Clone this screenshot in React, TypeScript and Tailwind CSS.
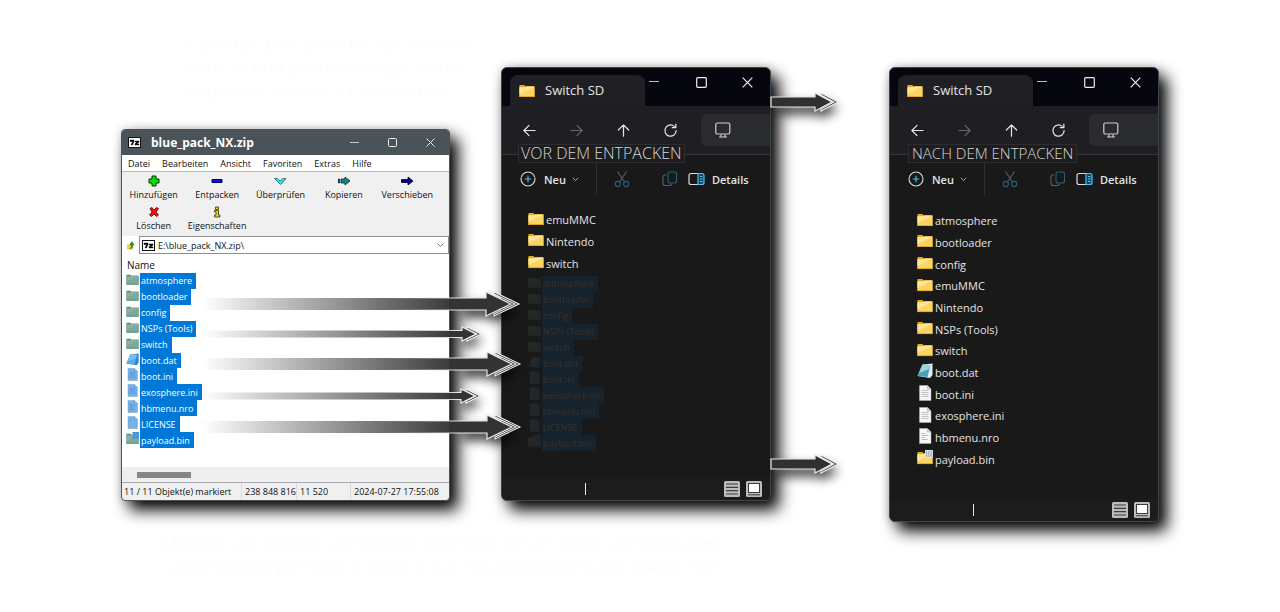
import React from "react";

type Kind = "folder" | "dat" | "doc" | "textdoc" | "blank" | "bin";
type Entry = { name: string; kind: Kind };

const archive: Entry[] = [
  { name: "atmosphere", kind: "folder" },
  { name: "bootloader", kind: "folder" },
  { name: "config", kind: "folder" },
  { name: "NSPs (Tools)", kind: "folder" },
  { name: "switch", kind: "folder" },
  { name: "boot.dat", kind: "dat" },
  { name: "boot.ini", kind: "doc" },
  { name: "exosphere.ini", kind: "doc" },
  { name: "hbmenu.nro", kind: "textdoc" },
  { name: "LICENSE", kind: "blank" },
  { name: "payload.bin", kind: "bin" },
];

const before: Entry[] = [
  { name: "emuMMC", kind: "folder" },
  { name: "Nintendo", kind: "folder" },
  { name: "switch", kind: "folder" },
];

const after: Entry[] = [
  { name: "atmosphere", kind: "folder" },
  { name: "bootloader", kind: "folder" },
  { name: "config", kind: "folder" },
  { name: "emuMMC", kind: "folder" },
  { name: "Nintendo", kind: "folder" },
  { name: "NSPs (Tools)", kind: "folder" },
  { name: "switch", kind: "folder" },
  { name: "boot.dat", kind: "dat" },
  { name: "boot.ini", kind: "doc" },
  { name: "exosphere.ini", kind: "doc" },
  { name: "hbmenu.nro", kind: "textdoc" },
  { name: "payload.bin", kind: "bin" },
];

/* File type icon; `selected` gives the blue-tinted version. */
function FileIcon({ kind, selected = false, className }: { kind: Kind; selected?: boolean; className: string }) {
  const tab = selected ? "#4f8f86" : "#f0a80c";
  const body = selected ? "#7fa79b" : "#fcd462";
  const light = selected ? "#8db0a0" : "#ffe596";
  const paper = selected ? "#78b0e4" : "#f6f6f6";
  const line = selected ? "#4d93d6" : "#b4b4b4";
  if (kind === "folder" || kind === "bin") {
    return (
      <svg viewBox="0 0 16 16" className={className} aria-hidden="true">
        <path d="M.5 2h5l1 1.500H15.500V14H.5z" fill={tab} />
        <path d="M.5 4.200h5.500l1-.7h8.500V14H.5z" fill={body} />
        <path d="M.5 4.200h5.500l1-.7h8.500L.5 11z" fill={light} />
        <path d="M.5 13.300h15v.8H.5z" fill={selected ? "#5b8f84" : "#d99a1c"} />
        {kind === "bin" && (
          <>
            <rect x="8" y="0" width="8" height="8" fill={selected ? "#3f8fdc" : "#e4e8ee"} />
            <path
              d="M9.500 1v6M12 1v6M14.500 1v6M8.500 2h7M8.500 4h7M8.500 6h7"
              stroke={selected ? "#6aa9e4" : "#7f95b5"}
              strokeWidth=".7"
              strokeDasharray="1.500 .6"
            />
          </>
        )}
      </svg>
    );
  }
  if (kind === "dat") {
    return (
      <svg viewBox="0 0 16 16" className={className} aria-hidden="true">
        <path d="M5.500 1.500 15.500.5V12l-2.500 3L.5 13z" fill={selected ? "#2f86cf" : "#dfeef2"} />
        <path d="M5.500 1.500 13.500 2l-3 12L.5 13z" fill={selected ? "#5fa9e2" : "#4f9fb4"} />
        <path d="M5.500 1.500 13.500 2l-1 4L2 10z" fill={selected ? "#7dbcec" : "#9ad2de"} />
      </svg>
    );
  }
  return (
    <svg viewBox="0 0 16 16" className={className} aria-hidden="true">
      <path d="M2.500.5h8l3.500 3.500v11.500H2.500z" fill={paper} stroke={line} strokeWidth=".5" />
      <path d="M10.500.5V4H14" fill={selected ? "#a5cdf0" : "#d0d0d0"} stroke={line} strokeWidth=".7" />
      {kind === "doc" && <path d="M4.500 5.500h7M4.500 7.500h7M4.500 9.500h7M4.500 11.500h7" stroke={line} strokeWidth=".8" />}
      {kind === "textdoc" && <path d="M4.500 5.500h4M4.500 7.500h7M4.500 9.500h3M4.500 11.500h6" stroke={line} strokeWidth=".9" />}
    </svg>
  );
}

function SevenZip({ className }: { className: string }) {
  return (
    <svg viewBox="0 0 13 11" className={className} aria-hidden="true">
      <rect width="13" height="11" fill="#111" />
      <rect x="1" y="1" width="11" height="9" fill="#fff" />
      <path d="M2 3h4v1.500L4.500 8H3l1.500-3.500H2zM7 4h4v1.200L8.800 7H11v1H7V6.800L9 5H7z" fill="#000" stroke="#000" strokeWidth=".4" />
    </svg>
  );
}

function SelectedList() {
  return (
    <ul className="grid h-[175px] grid-rows-11 text-[9px] text-white">
      {archive.map((f) => (
        <li key={f.name} className="flex items-stretch">
          <FileIcon kind={f.kind} selected className="mr-px size-[13px] shrink-0" />
          <span className="flex items-center bg-[#0078d7] pr-1 pl-px leading-none">{f.name}</span>
        </li>
      ))}
    </ul>
  );
}

const tools = [
  { label: "Hinzufügen", icon: <path d="M6 1h4v3h3v4h-3v3H6V8H3V4h3z" fill="#0de00d" stroke="#053805" /> },
  { label: "Entpacken", icon: <path d="M3 4.500h10v3H3z" fill="#1010f0" stroke="#000060" /> },
  { label: "Überprüfen", icon: <path d="M2.500 3.500h3L8 6l3-2.500h3L8.500 9.500z" fill="#20f0f0" stroke="#126070" strokeWidth=".8" /> },
  { label: "Kopieren", icon: <path d="M2.500 4h1v4h-1zM5 4h4V2l5 4-5 4V8H5z" fill="#0a8a8a" stroke="#022" strokeWidth=".8" /> },
  { label: "Verschieben", icon: <path d="M2.500 4.500H9V2l5 4-5 4V7.500H2.500z" fill="#00008c" stroke="#000030" strokeWidth=".8" /> },
  { label: "Löschen", icon: <path d="M4 2.500 6 1.500l2 2.500 2.500-2.500 2 1L10 6l2.500 3-2 1.500L8 8l-2.500 2.500-2-1.500L6 6z" fill="#f01010" stroke="#500" strokeWidth=".8" /> },
  { label: "Eigenschaften", icon: <path d="M6.500 1h3v2.500h-3zM5.500 4.500h4V9H11v2H5.500V9H7V6H5.500z" fill="#e8d810" stroke="#333000" strokeWidth=".8" /> },
];

function ZipWindow() {
  return (
    <section className="flex flex-col overflow-hidden rounded-sm border border-[#4a5358] bg-[#f0f0f0] text-[9px] text-[#111] shadow-[8px_9px_16px_rgba(0,0,0,1),0_0_10px_rgba(0,0,0,0.15)]">
      <header className="flex h-[25px] items-center bg-[#4a5358] text-white">
        <SevenZip className="ml-1.5 h-[11px] w-[13px]" />
        <h1 className="ml-2.5 text-[12px] leading-none font-bold">blue_pack_NX.zip</h1>
        <div className="ml-auto flex h-full">
          <button aria-label="Minimieren" className="grid w-[38px] place-items-center">
            <svg viewBox="0 0 9 9" className="size-[9px]"><path d="M0 4.500h9" stroke="#c8cccf" /></svg>
          </button>
          <button aria-label="Maximieren" className="grid w-[38px] place-items-center">
            <svg viewBox="0 0 9 9" className="size-[9px]"><rect x=".5" y=".5" width="8" height="8" rx="1" fill="none" stroke="#eee" /></svg>
          </button>
          <button aria-label="Schließen" className="grid w-[38px] place-items-center">
            <svg viewBox="0 0 9 9" className="size-[9px]"><path d="M.5.5l8 8M8.500.5l-8 8" stroke="#eee" /></svg>
          </button>
        </div>
      </header>
      <nav className="flex h-[17px] items-center gap-3 border-b border-[#b8babc] bg-white pl-1.5 leading-none">
        {["Datei", "Bearbeiten", "Ansicht", "Favoriten", "Extras", "Hilfe"].map((m) => (
          <button key={m}>{m}</button>
        ))}
      </nav>
      <div className="grid h-[64px] w-[317px] grid-cols-5 grid-rows-2 pt-[3px]">
        {tools.map((t) => (
          <button key={t.label} className="flex flex-col items-center gap-[3px] leading-none">
            <svg viewBox="0 0 16 12" className="h-3 w-4" aria-hidden="true">{t.icon}</svg>
            <span className="whitespace-nowrap">{t.label}</span>
          </button>
        ))}
      </div>
      <div className="flex h-[18px] items-stretch bg-[#f0f0f0]">
        <button aria-label="Übergeordneter Ordner" className="grid w-[17px] place-items-center bg-white">
          <svg viewBox="0 0 10 10" className="size-[9px]" aria-hidden="true">
            <path d="M1 4h3l1 1h3v4.500H1z" fill="#f5d040" />
            <path d="M4 8.500C6 8 6 6 6 4.500H4L6.500.5l2.500 4H7.500C7.500 7 7 8.500 4 8.500z" fill="#18a018" stroke="#0a500a" strokeWidth=".4" />
          </svg>
        </button>
        <label className="flex flex-1 items-center border border-[#8a8f96] bg-white pl-0.5">
          <SevenZip className="h-[11px] w-[13px] shrink-0" />
          <input
            aria-label="Pfad"
            defaultValue="E:\blue_pack_NX.zip\"
            className="ml-[3px] w-full min-w-0 bg-transparent leading-none outline-none"
          />
          <svg viewBox="0 0 7 5" className="mr-1 h-[5px] w-[7px] shrink-0" aria-hidden="true">
            <path d="M.5.5l3 3 3-3" fill="none" stroke="#777" />
          </svg>
        </label>
      </div>
      <div className="h-[213px] bg-white pl-1">
        <p className="flex h-[19px] items-center pt-0.5 pl-px text-[10px] leading-none">Name</p>
        <SelectedList />
      </div>
      <div className="flex h-[15px] items-center bg-[#efefef] pl-[15px]">
        <div className="h-[6px] w-[54px] bg-[#868686]" />
      </div>
      <footer className="flex h-[18px] items-center border-t border-[#a6aab0] leading-none whitespace-nowrap">
        <span className="w-[120px] border-r border-[#dadada] py-1 pl-0.5">11 / 11 Objekt(e) markiert</span>
        <span className="w-[55px] border-r border-[#dadada] py-1 pl-[3px]">238 848 816</span>
        <span className="w-[54px] border-r border-[#dadada] py-1 pl-[3px]">11 520</span>
        <span className="py-1 pl-[3px]">2024-07-27 17:55:08</span>
      </footer>
    </section>
  );
}

const navPaths = [
  { label: "Zurück", d: "M14 8H2M7.500 2.500 2 8l5.500 5.500", cls: "text-[#e6e6e6]" },
  { label: "Vorwärts", d: "M2 8h12M8.500 2.500 14 8l-5.500 5.500", cls: "text-[#66666a]" },
  { label: "Nach oben", d: "M8 14V2M2.500 7.500 8 2l5.500 5.500", cls: "text-[#e6e6e6]" },
  { label: "Aktualisieren", d: "M14 8a6 6 0 1 1-2-4.400M13.700 1.200v3.800H9.900", cls: "text-[#e6e6e6]" },
];

function Explorer({ badge, children }: { badge: React.ReactNode; children: React.ReactNode }) {
  return (
    <section className="flex w-[270px] flex-col overflow-hidden rounded-md border border-[#3d484d] bg-[#191919] text-[#e4e4e4] shadow-[8px_9px_16px_rgba(0,0,0,1),0_0_10px_rgba(0,0,0,0.2)]">
      <header className="flex h-[38px] items-end bg-[#06060e] pl-2">
        <div className="flex h-[31px] w-[135px] items-center rounded-t-lg bg-[#202024] pl-[9px]">
          <FileIcon kind="folder" className="size-4" />
          <h2 className="ml-2.5 text-[13px] leading-none">Switch SD</h2>
        </div>
        <div className="ml-auto flex h-[28px] self-start">
          <button aria-label="Minimieren" className="flex w-[29px] items-center">
            <svg viewBox="0 0 10 10" className="size-[10px]"><path d="M0 4.500h10" stroke="#bbb" /></svg>
          </button>
          <button aria-label="Maximieren" className="grid w-[46px] place-items-center">
            <svg viewBox="0 0 11 11" className="size-[11px]"><rect x=".7" y=".7" width="9.600" height="9.600" rx="1" fill="none" stroke="#eee" strokeWidth="1.200" /></svg>
          </button>
          <button aria-label="Schließen" className="grid w-[46px] place-items-center">
            <svg viewBox="0 0 11 11" className="size-[11px]"><path d="M.7.7l9.600 9.600M10.300.7.7 10.300" stroke="#eee" strokeWidth="1.200" /></svg>
          </button>
        </div>
      </header>
      <nav className="relative flex h-[49px] items-center border-b border-[#38383b] bg-[#1f1f23] pl-1">
        {navPaths.map((n) => (
          <button key={n.label} aria-label={n.label} className={`grid h-8 w-[47px] place-items-center ${n.cls}`}>
            <svg viewBox="0 0 16 16" className="size-[15px]" fill="none" stroke="currentColor" strokeWidth="1.300" strokeLinecap="round" strokeLinejoin="round"><path d={n.d} /></svg>
          </button>
        ))}
        <button aria-label="Dieser PC" className="ml-[7px] flex h-8 flex-1 items-center rounded-l-md bg-[#2a2b2f] pl-3.5">
          <svg viewBox="0 0 16 16" className="size-4" fill="none" stroke="#cfcfcf" strokeWidth="1.200" strokeLinejoin="round">
            <rect x=".8" y="1" width="14" height="11" rx="1.500" />
            <path d="M6 12.500v2M10 12.500v2M4 15h8" />
          </svg>
        </button>
        {badge}
      </nav>
      <div className="flex h-[48px] items-center pl-[18px] text-[11px] leading-none">
        <button className="flex h-8 items-center font-semibold">
          <svg viewBox="0 0 16 16" className="size-4" fill="none" strokeWidth="1.100">
            <circle cx="8" cy="8" r="7" stroke="#dcdcdc" />
            <path d="M8 4.800v6.400M4.800 8h6.400" stroke="#4cc2ff" />
          </svg>
          <span className="ml-2">Neu</span>
          <svg viewBox="0 0 7 5" className="ml-1.5 h-[5px] w-[7px]" fill="none"><path d="M.8.800l2.700 2.700L6.200.8" stroke="#aaa" /></svg>
        </button>
        <div className="ml-[17px] h-8 w-px bg-[#303030]" />
        <button aria-label="Ausschneiden" className="ml-[17px]">
          <svg viewBox="0 0 16 18" className="h-[18px] w-4" fill="none" strokeWidth="1.100">
            <path d="M3.500 1.500 10.500 12M12.500 1.500 5.500 12" stroke="#5e5e5e" />
            <circle cx="3.800" cy="14" r="2.600" stroke="#28607c" />
            <circle cx="12.200" cy="14" r="2.600" stroke="#28607c" />
          </svg>
        </button>
        <button aria-label="Kopieren" className="ml-8">
          <svg viewBox="0 0 16 16" className="size-4" fill="none" strokeWidth="1.100">
            <path d="M4 4H3a2 2 0 0 0-2 2v6.500a2 2 0 0 0 2 2h4.500a2 2 0 0 0 2-1.500" stroke="#5e5e5e" />
            <rect x="6" y="1" width="8.500" height="11" rx="2" stroke="#28607c" />
          </svg>
        </button>
        <button className="ml-2.5 flex items-center font-semibold">
          <svg viewBox="0 0 17 14" className="h-3.5 w-[17px]" fill="none" strokeWidth="1.200">
            <path d="M10 1.500H3a2 2 0 0 0-2 2v7a2 2 0 0 0 2 2h7" stroke="#dcdcdc" />
            <path d="M10 1.500h4a2 2 0 0 1 2 2v7a2 2 0 0 1-2 2h-4z" fill="#14445e" stroke="#4cc2ff" />
            <path d="M12 4.500h2.500M12 7h2.500M12 9.500h2.500" stroke="#4cc2ff" />
          </svg>
          <span className="ml-[7px]">Details</span>
        </button>
      </div>
      {children}
      <footer className="flex h-[22px] items-center gap-1.5 bg-[#1c1c1c] pr-2">
        <span className="mr-auto ml-[83px] h-3 w-px bg-[#e8e8e8]" />
        <button aria-label="Detailansicht">
          <svg viewBox="0 0 16 16" className="size-4">
            <rect width="16" height="16" rx="1.500" fill="#bdbdbd" />
            <path d="M2 3h12M2 6.300h12M2 9.600h12M2 13h12" stroke="#3c3c3c" strokeWidth="1.200" />
          </svg>
        </button>
        <button aria-label="Symbolansicht">
          <svg viewBox="0 0 16 16" className="size-4">
            <rect width="16" height="16" rx="1.500" fill="#bdbdbd" />
            <rect x="2.500" y="2.500" width="11" height="9" fill="#fff" stroke="#3c3c3c" />
            <path d="M2 13.800h12" stroke="#3c3c3c" />
          </svg>
        </button>
      </footer>
    </section>
  );
}

function FileList({ files, className }: { files: Entry[]; className: string }) {
  return (
    <ul className={className}>
      {files.map((f) => (
        <li key={f.name} className="flex items-center text-[11px] leading-none">
          <FileIcon kind={f.kind} className="mr-0.5 size-4" />
          <span className="pt-0.5">{f.name}</span>
        </li>
      ))}
    </ul>
  );
}

/* Arrow shape: y is the axis, b half the shaft, h half the head, s start, n neck, t tip, g chevron offset. */
type ArrowShape = { y: number; s: number; n: number; t: number; h: number; b: number; g: number; fade: boolean };

const flowArrows: ArrowShape[] = [
  { y: 304, s: 200, n: 486, t: 511, h: 12, b: 6, g: 8, fade: true },
  { y: 334, s: 200, n: 462, t: 476, h: 7, b: 3.5, g: 5, fade: true },
  { y: 364, s: 200, n: 487, t: 512, h: 12, b: 6, g: 8, fade: true },
  { y: 396, s: 200, n: 461, t: 475, h: 7, b: 3.5, g: 5, fade: true },
  { y: 427, s: 200, n: 487, t: 512, h: 12, b: 6, g: 8, fade: true },
  { y: 102, s: 771, n: 815, t: 832, h: 9, b: 5, g: 6, fade: false },
  { y: 464, s: 771, n: 815, t: 832, h: 9, b: 5, g: 6, fade: false },
];

function Arrow({ a }: { a: ArrowShape }) {
  const head = `L${a.n} ${a.y - a.b}V${a.y - a.h}L${a.t} ${a.y}L${a.n} ${a.y + a.h}V${a.y + a.b}`;
  const body = `M${a.s} ${a.y - a.b}${head}H${a.s}z`;
  const shadow = `M${a.fade ? 456 : a.s} ${a.y - a.b}${head}H${a.fade ? 456 : a.s}z`;
  const chevron = `M${a.n + a.g} ${a.y - a.h}L${a.t + a.g} ${a.y}L${a.n + a.g} ${a.y + a.h}v-2L${a.t + a.g - 4} ${a.y}L${a.n + a.g} ${a.y - a.h + 2}z`;
  return (
    <g>
      <path d={shadow} fill="#000" opacity=".85" className="translate-x-[6px] translate-y-[7px] blur-[6px]" />
      <path
        d={body}
        fill={a.fade ? "url(#shaft)" : "#303030"}
        stroke={a.fade ? "url(#edge)" : "#e8e8e8"}
        strokeWidth="1.200"
      />
      <path d={chevron} fill="#2a2a2a" stroke="#f0f0f0" strokeWidth="1.100" />
    </g>
  );
}

export default function App() {
  return (
    <main className="flex min-h-screen justify-center overflow-hidden bg-white [font-family:'Open_Sans','Noto_Sans',sans-serif]">
      <div className="relative flex items-start">
        <div className="mr-[51px] w-[329px] shrink-0 pt-8">
          <p className="mb-[25px] pl-[66px] text-[17px] leading-6 font-light whitespace-nowrap text-[#fcfcfc]">
            Lade das „blue_pack_NX.zip“ herunter,
            <br />
            öffne es und positioniere das Archiv
            <br />
            neben das "Switch SD" Verzeichnis .
          </p>
          <ZipWindow />
          <p className="mt-[30px] w-[644px] text-center text-[17px] leading-6 font-light whitespace-nowrap text-[#fcfcfc]">
            Markiere alle Ordner und Dateien innerhalb der ZIP-Datei und ziehe diese
            <br />
            anschließend per 'Drag &amp; Drop' in das Hauptverzeichnis der „Switch SD“
          </p>
        </div>
        <div className="mt-[67px] mr-[118px] shrink-0">
          <Explorer
            badge={
              <strong className="absolute top-[38px] left-4 border border-[#2d2d31] bg-[#1d1d20] px-0.5 text-[16px] leading-[17px] font-light whitespace-nowrap text-[#d6d6d6]">
                VOR DEM ENTPACKEN
              </strong>
            }
          >
            <div className="h-[275px] pt-[5px] pl-[26px]">
              <FileList files={before} className="grid h-[65px] grid-rows-3" />
              <div className="mt-[3px] opacity-10">
                <SelectedList />
              </div>
            </div>
          </Explorer>
        </div>
        <div className="mt-[67px] shrink-0">
          <Explorer
            badge={
              <strong className="absolute top-[38px] left-[18px] border border-[#2d2d31] bg-[#1d1d20] px-[3px] text-[15px] leading-[17px] font-light whitespace-nowrap text-[#d6d6d6]">
                NACH DEM ENTPACKEN
              </strong>
            }
          >
            <div className="h-[296px] pt-[6px] pl-[27px]">
              <FileList files={after} className="grid h-[260px] grid-rows-12" />
            </div>
          </Explorer>
        </div>
        <svg
          viewBox="121 0 1038 612"
          className="pointer-events-none absolute top-0 left-0 h-[612px] w-[1038px]"
          aria-hidden="true"
        >
          <defs>
            <linearGradient id="shaft" gradientUnits="userSpaceOnUse" x1="202" y1="0" x2="460" y2="0">
              <stop offset="0" stopColor="#333" stopOpacity="0" />
              <stop offset="1" stopColor="#333" />
            </linearGradient>
            <linearGradient id="edge" gradientUnits="userSpaceOnUse" x1="380" y1="0" x2="460" y2="0">
              <stop offset="0" stopColor="#e8e8e8" stopOpacity="0" />
              <stop offset="1" stopColor="#e8e8e8" />
            </linearGradient>
          </defs>
          {flowArrows.map((a) => (
            <Arrow key={`${a.s}-${a.y}`} a={a} />
          ))}
        </svg>
      </div>
    </main>
  );
}
